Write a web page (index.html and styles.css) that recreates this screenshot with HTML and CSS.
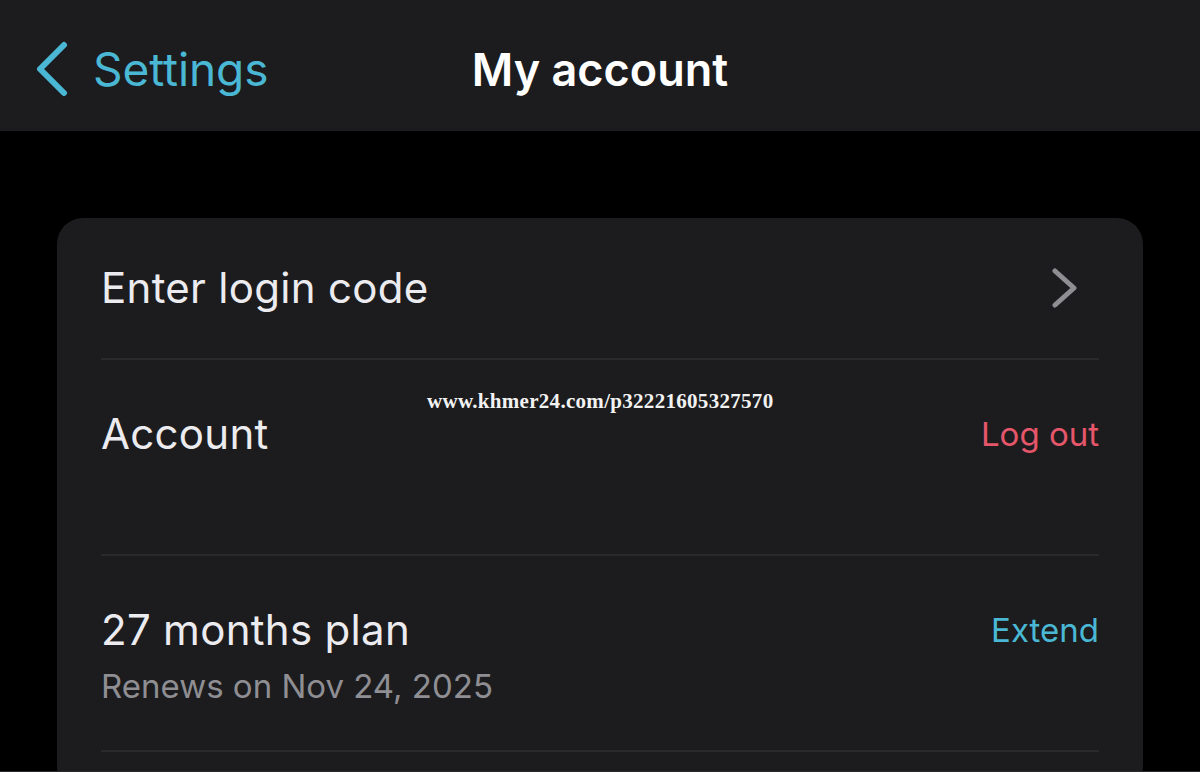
FILE: index.html
```html
<!DOCTYPE html>
<html>
<head>
<meta charset="utf-8">
<link rel="stylesheet" href="styles.css">
</head>
<body>
<div class="page">
  <header class="nav">
    <div class="back">
      <svg class="back-icon" width="34" height="56" viewBox="0 0 34 56"><path d="M29 4 L5 28 L29 52" fill="none" stroke="#4ab8d4" stroke-width="6" stroke-linecap="round" stroke-linejoin="round"/></svg>
      <span class="back-label">Settings</span>
    </div>
    <h1 class="title">My account</h1>
  </header>
  <main class="content">
    <section class="card">
      <div class="row row-nav">
        <span class="row-title">Enter login code</span>
        <svg class="chev" width="28" height="40" viewBox="0 0 28 40"><path d="M4 3 L23 20 L4 37" fill="none" stroke="#8e8e93" stroke-width="5" stroke-linecap="round" stroke-linejoin="round"/></svg>
      </div>
      <div class="row row-tall">
        <div class="row-text">
          <span class="row-title">Account</span>
        </div>
        <span class="action action-red">Log out</span>
        <span class="watermark">www.khmer24.com/p32221605327570</span>
      </div>
      <div class="row row-tall">
        <div class="row-text">
          <span class="row-title">27 months plan</span>
          <span class="row-sub">Renews on Nov 24, 2025</span>
        </div>
        <span class="action action-blue">Extend</span>
      </div>
      <div class="row row-last"></div>
    </section>
  </main>
</div>
</body>
</html>
```

FILE: styles.css
```css
html, body {
  margin: 0;
  padding: 0;
  background: #000;
}
body {
  font-family: Inter, "Noto Sans", "Liberation Sans", sans-serif;
  color: #ececf0;
}
.page {
  width: 1200px;
  height: 772px;
  overflow: hidden;
  background: #000;
  border-bottom: 1px solid #2a2a2c;
  box-sizing: border-box;
}
.nav {
  position: relative;
  height: 131px;
  background: #1c1c1e;
  display: flex;
  align-items: center;
}
.back {
  display: flex;
  align-items: center;
  padding-left: 35px;
  gap: 24px;
  margin-top: 6px;
}
.back-icon { display: block; }
.back-label {
  font-size: 46px;
  color: #4ab8d4;
  letter-spacing: -0.1px;
}
.title {
  position: absolute;
  left: 0;
  right: 0;
  top: 0;
  margin: 0;
  height: 131px;
  line-height: 140px;
  text-align: center;
  font-size: 45px;
  font-weight: 600;
  color: #ffffff;
  pointer-events: none;
}
.content {
  padding: 87px 57px 0 57px;
}
.card {
  background: #1c1c1e;
  border-radius: 26px;
  padding: 0 44px;
}
.row {
  position: relative;
  display: flex;
  justify-content: space-between;
  border-bottom: 2px solid #2a2a2d;
  box-sizing: border-box;
}
.row-nav {
  height: 142px;
  align-items: center;
  padding-left: 0;
}
.chev { margin-right: 20px; display: block; }
.row-tall {
  height: 196px;
  align-items: flex-start;
  padding-top: 50px;
  padding-left: 0;
}
.row-text {
  display: flex;
  flex-direction: column;
}
.row-title {
  font-size: 42px;
  line-height: 48px;
  letter-spacing: 0.3px;
  color: #ececf0;
}
.row-sub {
  font-size: 33px;
  line-height: 40px;
  margin-top: 12px;
  color: #8e8e93;
}
.action {
  font-size: 33px;
  line-height: 48px;
}
.action-red { color: #e5566b; }
.action-blue { color: #4ab8d4; }
.row-last {
  height: 40px;
  border-bottom: none;
}
.watermark {
  position: absolute;
  left: 326px;
  top: 29px;
  font-family: "Liberation Serif", "DejaVu Serif", serif;
  font-weight: bold;
  font-size: 21px;
  color: #f2f2f2;
  letter-spacing: 0.3px;
}
```
